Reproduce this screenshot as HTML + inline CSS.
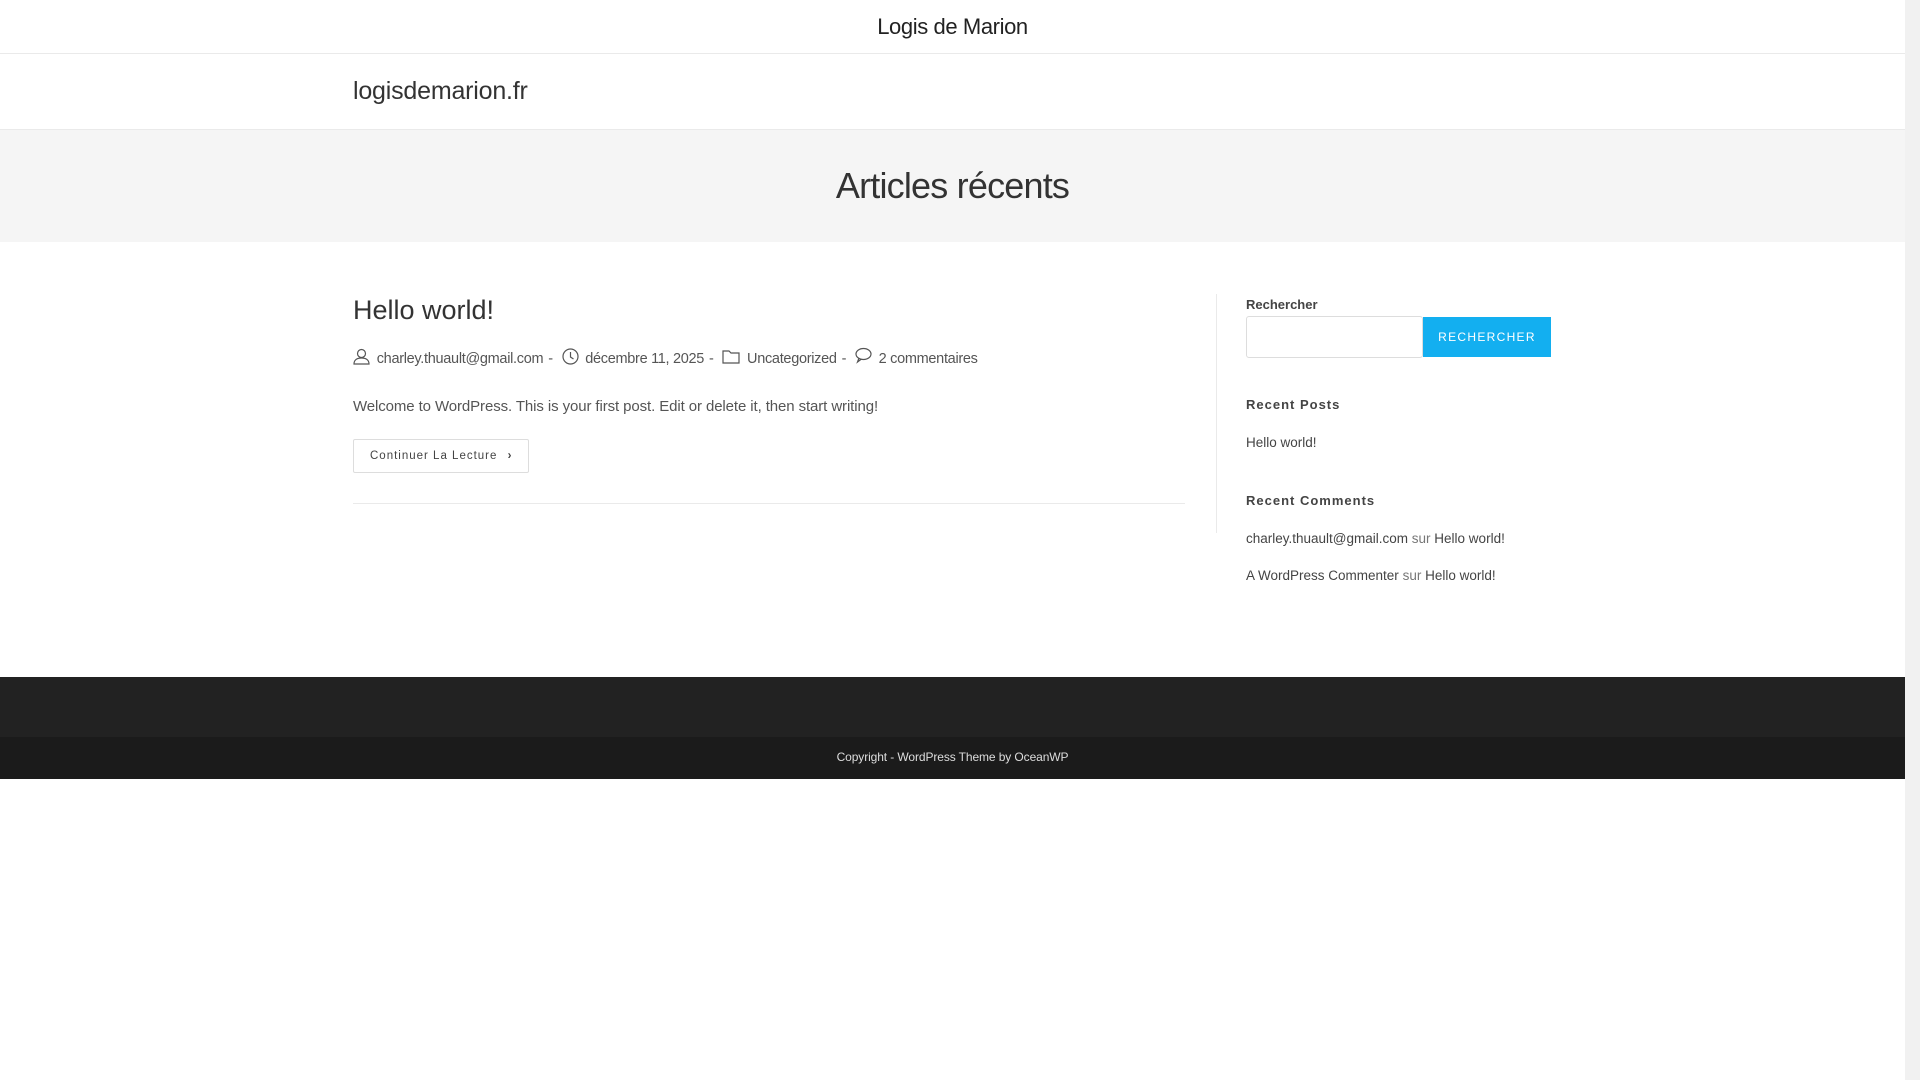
<!DOCTYPE html>
<html><head><meta charset="utf-8"><style>
*{margin:0;padding:0;box-sizing:border-box}
body{width:1920px;height:1080px;overflow:hidden;background:#fff;font-family:"Liberation Sans",sans-serif;color:#333;position:relative}
.a{position:absolute;white-space:nowrap}
.sb{position:absolute;right:0;top:0;width:15px;height:1080px;background:#f1f1f1}
</style></head><body>
<div class="a" style="left:0;top:0;width:1905px;height:54px;border-bottom:1px solid #eaeaea"></div>
<div class="a" style="left:0;width:1905px;top:14px;text-align:center;font-size:22px;color:#222;letter-spacing:-0.4px">Logis de Marion</div>
<div class="a" style="left:353px;top:77px;font-size:25px;color:#333;letter-spacing:-0.2px">logisdemarion.fr</div>
<div class="a" style="left:0;top:129px;width:1905px;height:113px;background:#f5f5f5;border-top:1px solid #eaeaea"></div>
<div class="a" style="left:0;width:1905px;top:165px;text-align:center;font-size:36px;color:#333;letter-spacing:-0.8px">Articles récents</div>

<div class="a" style="left:353px;top:295px;font-size:27px;color:#333">Hello world!</div>
<div class="a" style="left:353px;top:347px;font-size:14.5px;color:#555;letter-spacing:-0.3px">
<svg width="17" height="17" viewBox="0 0 17 17" style="vertical-align:-2px" fill="none" stroke="#555" stroke-width="1.2"><circle cx="8.5" cy="5.5" r="4"/><path d="M1 16c0-4 3-6 7.5-6s7.5 2 7.5 6z"/></svg>
<span style="margin-left:3px">charley.thuault@gmail.com</span><span style="margin:0 5px">-</span>
<svg width="17" height="17" viewBox="0 0 17 17" style="vertical-align:-2px" fill="none" stroke="#555" stroke-width="1.2"><circle cx="8.5" cy="8.5" r="7.5"/><path d="M8.5 4v5l3 2"/></svg>
<span style="margin-left:3px">décembre 11, 2025</span><span style="margin:0 5px">-</span>
<svg width="18" height="15" viewBox="0 0 18 15" style="vertical-align:-1px" fill="none" stroke="#555" stroke-width="1.2"><path d="M1 2h6l2 2h8v10H1z"/></svg>
<span style="margin-left:3px">Uncategorized</span><span style="margin:0 5px">-</span>
<svg width="17" height="17" viewBox="0 0 17 17" style="vertical-align:-1px" fill="none" stroke="#555" stroke-width="1.2"><ellipse cx="8.5" cy="7" rx="7.5" ry="5.5"/><path d="M4 11l-1.5 4 4-3"/></svg>
<span style="margin-left:3px">2 commentaires</span></div>
<div class="a" style="left:353px;top:398px;font-size:15px;color:#555;letter-spacing:-0.1px">Welcome to WordPress. This is your first post. Edit or delete it, then start writing!</div>
<div class="a" style="left:353px;top:439px;width:176px;height:34px;border:1px solid #ddd;border-radius:2px;font-size:11.5px;color:#444;letter-spacing:1px;padding:10px 0 0 16px">Continuer La Lecture <span style="font-weight:bold;margin-left:6px">›</span></div>
<div class="a" style="left:353px;top:503px;width:832px;height:1px;background:#eaeaea"></div>

<div class="a" style="left:1216px;top:294px;width:1px;height:239px;background:#eaeaea"></div>
<div class="a" style="left:1246px;top:297px;font-size:13px;font-weight:bold;color:#444">Rechercher</div>
<div class="a" style="left:1246px;top:316px;width:177px;height:42px;border:1px solid #ddd;border-radius:3px"></div>
<div class="a" style="left:1423px;top:317px;width:128px;height:40px;background:#13aff0;color:#fff;font-size:12px;letter-spacing:1.3px;text-align:center;line-height:40px">RECHERCHER</div>
<div class="a" style="left:1246px;top:397px;font-size:13px;font-weight:bold;color:#444;letter-spacing:1px">Recent Posts</div>
<div class="a" style="left:1246px;top:435px;font-size:13.5px;color:#444">Hello world!</div>
<div class="a" style="left:1246px;top:493px;font-size:13px;font-weight:bold;color:#444;letter-spacing:1px">Recent Comments</div>
<div class="a" style="left:1246px;top:531px;font-size:13.5px;color:#444">charley.thuault@gmail.com <span style="color:#777">sur</span> Hello world!</div>
<div class="a" style="left:1246px;top:568px;font-size:13.5px;color:#444">A WordPress Commenter <span style="color:#777">sur</span> Hello world!</div>

<div class="a" style="left:0;top:677px;width:1905px;height:60px;background:#222"></div>
<div class="a" style="left:0;top:737px;width:1905px;height:42px;background:#1b1b1b"></div>
<div class="a" style="left:0;width:1905px;top:750px;text-align:center;font-size:12px;color:#ddd;letter-spacing:-0.1px">Copyright - WordPress Theme by OceanWP</div>
<div class="sb"></div>
</body></html>
